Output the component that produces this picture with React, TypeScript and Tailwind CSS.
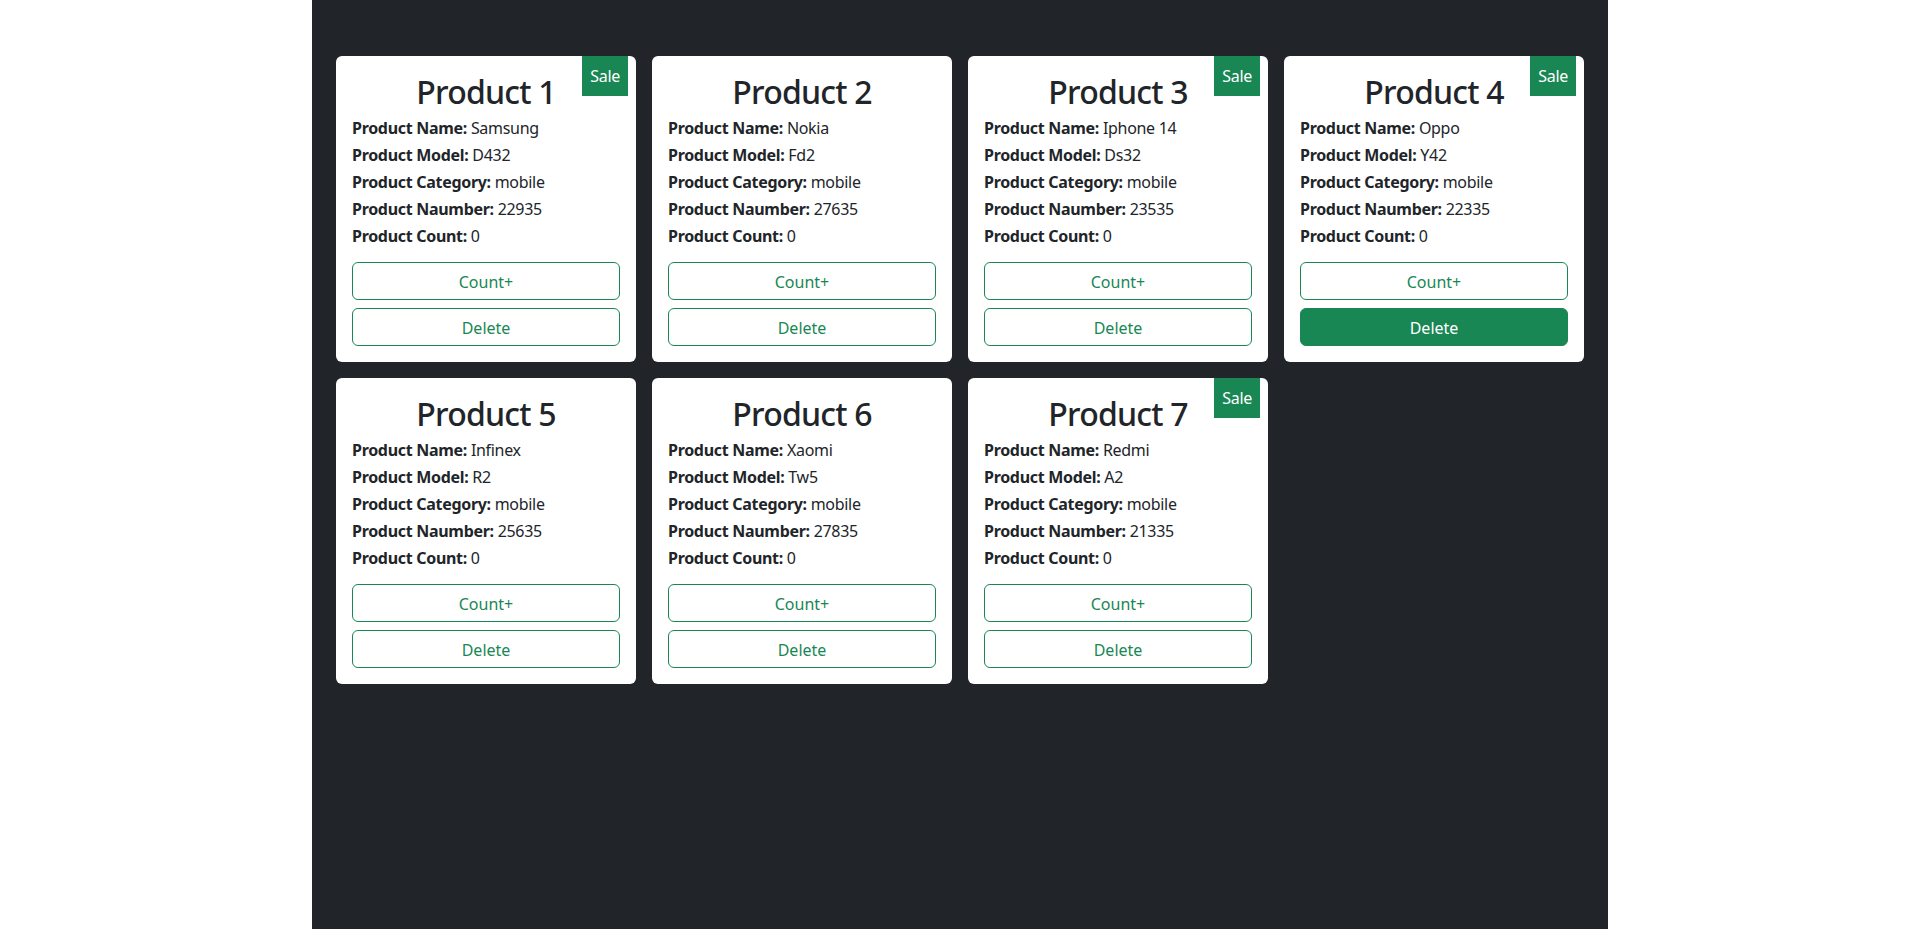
const products = [
  { id: 1, name: "Samsung", model: "D432", category: "mobile", number: 22935, count: 0, sale: true },
  { id: 2, name: "Nokia", model: "Fd2", category: "mobile", number: 27635, count: 0, sale: false },
  { id: 3, name: "Iphone 14", model: "Ds32", category: "mobile", number: 23535, count: 0, sale: true },
  { id: 4, name: "Oppo", model: "Y42", category: "mobile", number: 22335, count: 0, sale: true },
  { id: 5, name: "Infinex", model: "R2", category: "mobile", number: 25635, count: 0, sale: false },
  { id: 6, name: "Xaomi", model: "Tw5", category: "mobile", number: 27835, count: 0, sale: false },
  { id: 7, name: "Redmi", model: "A2", category: "mobile", number: 21335, count: 0, sale: true },
];

type Product = (typeof products)[number];

function Row({ label, value }: { label: string; value: string | number }) {
  return (
    <p className="leading-[27px] tracking-[-0.3px]">
      <b className="font-bold">{label}:</b> {value}
    </p>
  );
}

function ProductCard({ p, hoverDelete }: { p: Product; hoverDelete?: boolean }) {
  return (
    <div className="relative h-[306px] w-[300px] rounded-md bg-white p-4 text-[#212529]">
      {p.sale && (
        <span className="absolute right-2 top-0 bg-[#198754] px-2 py-2 text-base leading-6 tracking-[-0.3px] text-white">
          Sale
        </span>
      )}
      <h2 className="mb-[3px] text-center text-[32px] font-medium leading-[40px] tracking-[-0.8px]">
        Product {p.id}
      </h2>
      <Row label="Product Name" value={p.name} />
      <Row label="Product Model" value={p.model} />
      <Row label="Product Category" value={p.category} />
      <Row label="Product Naumber" value={p.number} />
      <Row label="Product Count" value={p.count} />
      <div className="mt-[12px] flex flex-col gap-2">
        <button className="h-[38px] rounded-md border border-[#198754] pt-px text-[#198754]">Count+</button>
        <button
          className={
            hoverDelete
              ? "h-[38px] rounded-md border border-[#198754] bg-[#198754] pt-px text-white"
              : "h-[38px] rounded-md border border-[#198754] pt-px text-[#198754]"
          }
        >
          Delete
        </button>
      </div>
    </div>
  );
}

export default function App() {
  return (
    <div className="flex min-h-screen justify-center bg-white font-['Segoe_UI','Noto_Sans',sans-serif]">
      <div className="min-h-[929px] w-[1296px] bg-[#212529] px-6 pt-14">
        <div className="grid grid-cols-[repeat(4,300px)] gap-4">
          {products.map((p) => (
            <ProductCard key={p.id} p={p} hoverDelete={p.id === 4} />
          ))}
        </div>
      </div>
    </div>
  );
}
